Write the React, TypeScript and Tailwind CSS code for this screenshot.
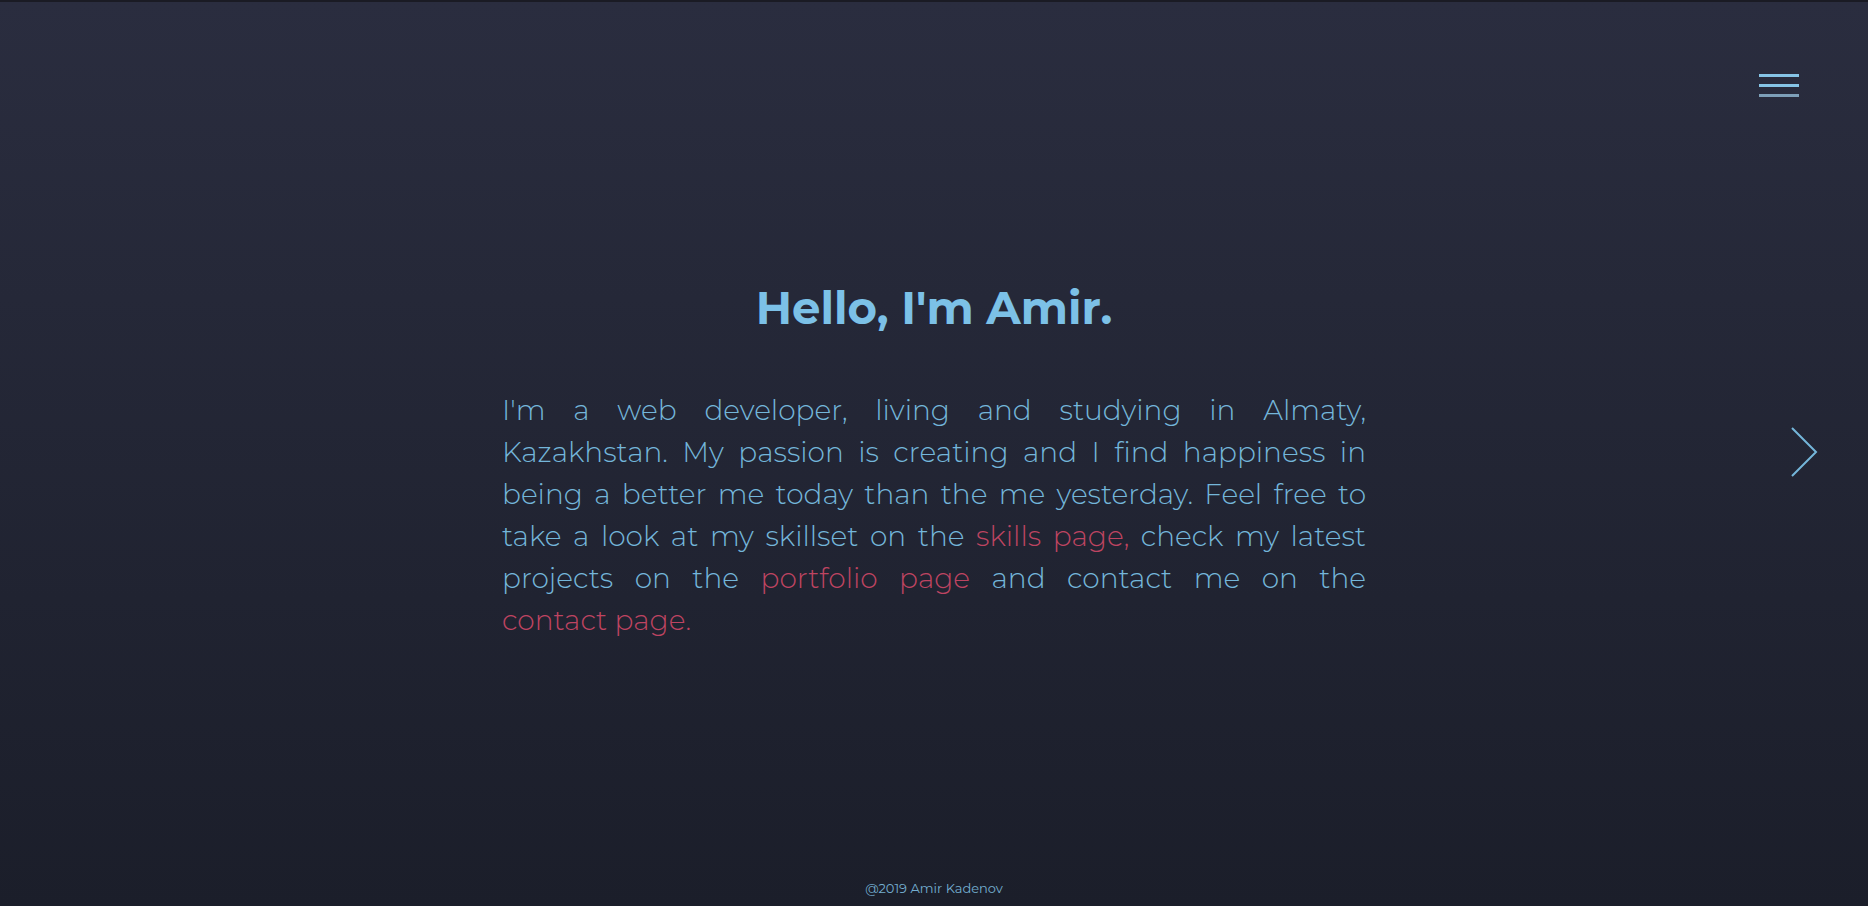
export default function App() {
  return (
    <div
      className="relative flex h-screen w-full flex-col border-t-2 border-[#1a1b24] bg-gradient-to-b from-[#2a2d3f] to-[#1b1e2a]"
      style={{ fontFamily: "Montserrat, 'Open Sans', sans-serif" }}
    >
      <button className="absolute right-[69px] top-[72px] flex w-10 flex-col gap-[7px]">
        <span className="h-[3px] w-10 bg-[#86c4e6]"></span>
        <span className="h-[3px] w-10 bg-[#86c4e6]"></span>
        <span className="h-[3px] w-10 bg-[#7d9fb8]"></span>
      </button>

      <main className="flex flex-1 flex-col items-center justify-center pt-[34px]">
        <h1 className="text-[45px] font-bold text-[#7cc1e7]">Hello, I'm Amir.</h1>
        <p className="mt-[47px] w-[864px] text-justify text-[28px] font-light leading-[42px] text-[#74b6da]">
          I'm a web developer, living and studying in Almaty, Kazakhstan. My passion is creating and I
          find happiness in being a better me today than the me yesterday. Feel free to take a look at
          my skillset on the <a className="text-[#be4461]">skills page,</a> check my latest projects on
          the <a className="text-[#be4461]">portfolio page</a> and contact me on the{' '}
          <a className="inline-block text-[#be4461]">contact page.</a>
        </p>
      </main>

      <button className="absolute right-[50px] top-[424px] text-[#74b6da]">
        <svg width="28" height="52" viewBox="0 0 28 52" fill="none">
          <path d="M2 2 L26 26 L2 50" stroke="currentColor" strokeWidth="2" />
        </svg>
      </button>

      <footer className="pb-[8px] text-center text-[13px] text-[#74aed0]">@2019 Amir Kadenov</footer>
    </div>
  );
}
